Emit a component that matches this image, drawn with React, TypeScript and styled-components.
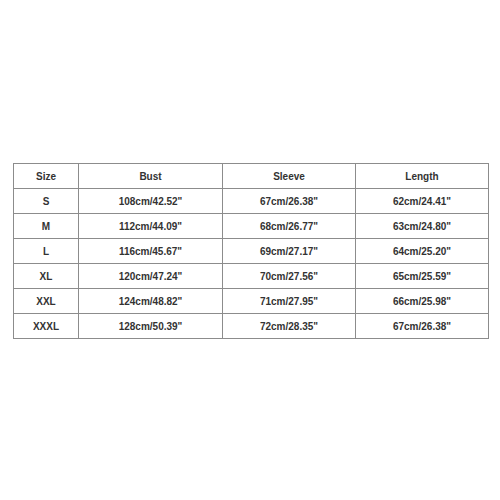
import React from 'react';
import styled, { createGlobalStyle } from 'styled-components';

const GlobalStyle = createGlobalStyle`
  html, body {
    margin: 0;
    padding: 0;
    background: #ffffff;
  }
  body {
    font-family: "Liberation Sans", Arial, sans-serif;
  }
`;

const Page = styled.div`
  width: 500px;
  height: 500px;
  display: flex;
  flex-direction: column;
  padding: 163px 0 0 13px;
  box-sizing: border-box;
`;

const Table = styled.table`
  width: 475px;
  border-collapse: collapse;
  table-layout: fixed;
  color: #333333;
  font-size: 10px;
  font-weight: bold;
`;

const Cell = styled.td`
  height: 24px;
  padding: 0;
  text-align: center;
  vertical-align: middle;
  border: 1px solid #8c8c8c;
`;

const columns = [
  { key: 'size', label: 'Size', width: 65 },
  { key: 'bust', label: 'Bust', width: 144 },
  { key: 'sleeve', label: 'Sleeve', width: 133 },
  { key: 'length', label: 'Length', width: 133 },
];

const rows = [
  ['S', '108cm/42.52"', '67cm/26.38"', '62cm/24.41"'],
  ['M', '112cm/44.09"', '68cm/26.77"', '63cm/24.80"'],
  ['L', '116cm/45.67"', '69cm/27.17"', '64cm/25.20"'],
  ['XL', '120cm/47.24"', '70cm/27.56"', '65cm/25.59"'],
  ['XXL', '124cm/48.82"', '71cm/27.95"', '66cm/25.98"'],
  ['XXXL', '128cm/50.39"', '72cm/28.35"', '67cm/26.38"'],
];

const App: React.FC = () => {
  return (
    <>
      <GlobalStyle />
      <Page>
        <Table>
          <colgroup>
            {columns.map((c) => (
              <col key={c.key} style={{ width: c.width }} />
            ))}
          </colgroup>
          <tbody>
            <tr>
              {columns.map((c) => (
                <Cell key={c.key}>{c.label}</Cell>
              ))}
            </tr>
            {rows.map((r) => (
              <tr key={r[0]}>
                {r.map((v, i) => (
                  <Cell key={i}>{v}</Cell>
                ))}
              </tr>
            ))}
          </tbody>
        </Table>
      </Page>
    </>
  );
};

export default App;
